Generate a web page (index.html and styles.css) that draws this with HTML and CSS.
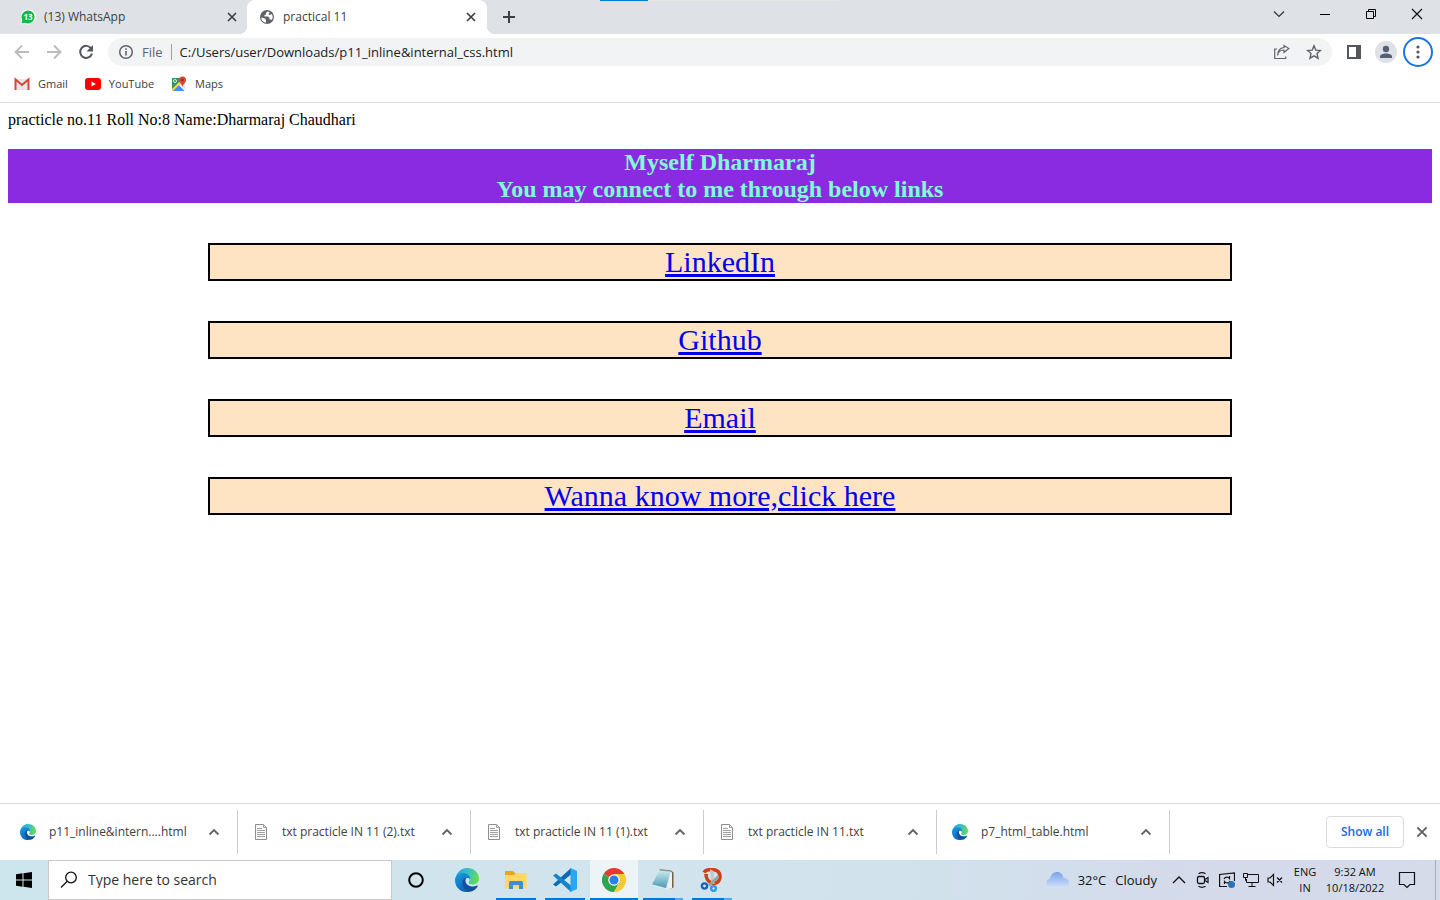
FILE: index.html
```html
<!DOCTYPE html>
<html lang="en">
<head>
<meta charset="utf-8">
<title>practical 11</title>
<link rel="stylesheet" href="styles.css">
</head>
<body class="desktop">
<svg class="defs" aria-hidden="true">
  <defs>
    <linearGradient id="edgeTop" x1="0" y1="0.3" x2="1" y2="0.5"><stop offset="0" stop-color="#2aa5dd"/><stop offset="0.5" stop-color="#35c1c4"/><stop offset="1" stop-color="#66e04a"/></linearGradient>
    <linearGradient id="edgeLeft" x1="0" y1="0" x2="0.5" y2="1"><stop offset="0" stop-color="#1b9de2"/><stop offset="1" stop-color="#0d62bf"/></linearGradient>
    <linearGradient id="cloud" x1="0" y1="0" x2="0" y2="1"><stop offset="0" stop-color="#7ba3e8"/><stop offset="1" stop-color="#d3e2fb"/></linearGradient>
    <linearGradient id="pad" x1="0" y1="0" x2="0" y2="1"><stop offset="0" stop-color="#c9e9ef"/><stop offset="1" stop-color="#4c9bb5"/></linearGradient>
    <symbol id="edge" viewBox="0 0 24 24">
      <path d="M1 9C2 4 6.500 0 12 0c7 0 12 5 12 10.500 0 4-3 6-6.500 6-2.500 0-4-1-4-2 0-.700 1.200-1.300 1.200-3 0-2.500-2.700-4.500-6.200-4.500C5 7 2 8 1 9z" fill="url(#edgeTop)"/>
      <path d="M0 12c0-4 3.500-7 8-7 4.500 0 7.500 3 7 6.500-1-2-5-2-6.500.500C6 16 9 22 15 23.500 7 26 0 20 0 12z" fill="url(#edgeLeft)"/>
      <path d="M9 10.500C5.500 14 7 21 13.500 23.800c4 0 7.500-2.300 9.200-5.600.300-.600-.200-.900-.700-.600C17 20 10 17.500 10.500 12c.100-1 .500-1.800 1-2.300-1 0-1.800.200-2.500.8z" fill="#12509d"/>
    </symbol>
    <symbol id="doc" viewBox="0 0 16 16">
      <path d="M2.500.5h8l3 3v12h-11z" fill="#fafafa" stroke="#8f8f8f"/><path d="M10.500.5v3h3M4 4.500h5M4 6.500h8M4 8.500h8M4 10.500h8M4 12.500h8" fill="none" stroke="#a0a0a0"/>
    </symbol>
    <symbol id="caret" viewBox="0 0 12 12"><path d="M1.500 8.500 6 4l4.500 4.500" fill="none" stroke="#5f6368" stroke-width="1.800"/></symbol>
    <symbol id="close" viewBox="0 0 12 12"><path d="m2 2 8 8M10 2l-8 8" fill="none" stroke="currentColor" stroke-width="1.700"/></symbol>
  </defs>
</svg>

<header class="browser">
  <div class="tabstrip">
    <div class="tab">
      <svg class="i16" viewBox="0 0 16 16"><path d="M.5 15.500 1.500 11A7.500 7.500 0 1 1 5 14.700z" fill="#fff"/><path d="M1.500 14.500 2.300 11A6.500 6.500 0 1 1 5 13.700z" fill="#12b948"/><text x="8" y="11" text-anchor="middle" class="badge">13</text></svg>
      <span class="tab-title">(13) WhatsApp</span>
      <button class="tab-close" aria-label="Close tab"><svg class="i12"><use href="#close"/></svg></button>
    </div>
    <div class="tab active">
      <svg class="i16" viewBox="0 0 16 16"><circle cx="8" cy="8" r="7" fill="#5f6368"/><path d="M2.500 8.500 6 9.500l1 1.500v2.500C4 13.500 2 11 2.500 8.500zM8.500 2.500 7 4v1.500L5.500 6v1.500H9L10.500 9v1.500h1.500l1 .5C14 8.500 14 6.500 12.500 5L11 6 9.500 5.500 10.500 3z" fill="#fff"/></svg>
      <span class="tab-title">practical 11</span>
      <button class="tab-close" aria-label="Close tab"><svg class="i12"><use href="#close"/></svg></button>
    </div>
    <button class="new-tab" aria-label="New tab"><svg class="i12" viewBox="0 0 12 12"><path d="M6 0v12M0 6h12" stroke="#3c4043" stroke-width="2"/></svg></button>
    <div class="progress"><span></span></div>
    <div class="window-controls">
      <button aria-label="Search tabs"><svg class="i12" viewBox="0 0 12 12"><path d="m1 3.500 5 5 5-5" fill="none" stroke="#333" stroke-width="1.200"/></svg></button>
      <button aria-label="Minimize"><svg class="i12" viewBox="0 0 12 12"><path d="M1 6.500h10" stroke="#000"/></svg></button>
      <button aria-label="Restore"><svg class="i12" viewBox="0 0 12 12"><path d="M1.500 3.500h7v7h-7zM3.500 3.500v-2h7v7h-2" fill="none" stroke="#000"/></svg></button>
      <button aria-label="Close"><svg class="i12" viewBox="0 0 12 12"><path d="m1 1 10 10M11 1 1 11" stroke="#111" stroke-width="1.200"/></svg></button>
    </div>
  </div>
  <div class="toolbar">
    <button class="tool" aria-label="Back"><svg class="i16" viewBox="0 0 16 16"><path d="M15 8H2M8 1.500 1.500 8 8 14.500" fill="none" stroke="#babcbe" stroke-width="1.800"/></svg></button>
    <button class="tool" aria-label="Forward"><svg class="i16" viewBox="0 0 16 16"><path d="M1 8h13M8 1.500 14.500 8 8 14.500" fill="none" stroke="#babcbe" stroke-width="1.800"/></svg></button>
    <button class="tool" aria-label="Reload"><svg class="i16" viewBox="0 0 16 16"><path d="M13.200 4.500A6 6 0 1 0 14 9.500" fill="none" stroke="#53565a" stroke-width="2"/><path d="M15 1v6.500H8.500z" fill="#53565a"/></svg></button>
    <div class="omnibox">
      <svg class="i16" viewBox="0 0 16 16"><circle cx="8" cy="8" r="6.300" fill="none" stroke="#5f6368" stroke-width="1.500"/><path d="M8 7v4.500M8 4.200v1.600" stroke="#5f6368" stroke-width="1.600"/></svg>
      <label class="scheme" for="url">File</label>
      <input id="url" class="url" type="text" value="C:/Users/user/Downloads/p11_inline&amp;internal_css.html">
      <button class="tool" aria-label="Share"><svg class="i16" viewBox="0 0 16 16"><path d="M3 5H.700v9.500h11V12.500M3.700 11.500C4 7.500 6.500 6 10 6v2.500l4.800-4L10 1.500v2C6 4 3.700 7 3.700 11.500z" fill="none" stroke="#5f6368" stroke-width="1.200"/></svg></button>
      <button class="tool" aria-label="Bookmark this page"><svg class="i16" viewBox="0 0 16 16"><path d="m8 1.800 1.800 4.300 4.700.4-3.500 3.100 1 4.600L8 11.800l-4 2.400 1-4.600L1.500 6.500l4.700-.4z" fill="none" stroke="#5f6368" stroke-width="1.400"/></svg></button>
    </div>
    <button class="tool" aria-label="Side panel"><svg class="i16" viewBox="0 0 16 16"><path d="M2 2h12v12H2z" fill="none" stroke="#53565a" stroke-width="2"/><path d="M10 2h5v12h-5z" fill="#53565a"/></svg></button>
    <button class="tool" aria-label="Profile"><svg class="i22" viewBox="0 0 22 22"><circle cx="11" cy="11" r="11" fill="#dee1e6"/><circle cx="11" cy="8" r="3.200" fill="#566074"/><path d="M5 17v-1.500c0-2 3-3 6-3s6 1 6 3V17z" fill="#566074"/></svg></button>
    <button class="menu" aria-label="Menu"><svg class="i16" viewBox="0 0 16 16" fill="#53565a"><circle cx="8" cy="3" r="1.600"/><circle cx="8" cy="8" r="1.600"/><circle cx="8" cy="13" r="1.600"/></svg></button>
  </div>
  <nav class="bookmarks" aria-label="Bookmarks">
    <a href="#gmail"><svg class="i16" viewBox="0 0 16 16"><path d="M1 3h14v11H1z" fill="#e6e6e6"/><path d="M1.500 14V3.500L8 9l6.500-5.500V14" fill="none" stroke="#d9453a" stroke-width="2"/></svg>Gmail</a>
    <a href="#youtube"><svg class="i16" viewBox="0 0 16 16"><rect y="2" width="16" height="12" rx="3" fill="#f00"/><path d="m6.500 5.500 4.500 2.500-4.500 2.500z" fill="#fff"/></svg>YouTube</a>
    <a href="#maps"><svg class="i16" viewBox="0 0 16 16"><rect x="1" y="2" width="13" height="13" rx="1" fill="#e3e6e8"/><path d="M1 2h9L8 8l-7 6z" fill="#31985a"/><path d="m1.500 15 6.500-6.500 6 6.500z" fill="#4a8af4"/><path d="m1 14.500 8-8" stroke="#fdd34a" stroke-width="2"/><path d="m8 8.500 6 6.500" stroke="#fff"/><circle cx="4" cy="5" r="1.500" fill="none" stroke="#d6eadd"/><path d="M11.500 11C11 8 8 7 8 4a3.500 3.500 0 0 1 7 0c0 3-3 4-3.500 7z" fill="#db4437"/><circle cx="11.500" cy="4" r="1.300" fill="#8a2a22"/></svg>Maps</a>
  </nav>
</header>

<main class="page">
  <p class="intro">practicle no.11 Roll No:8 Name:Dharmaraj Chaudhari</p>
  <h2 class="banner">Myself Dharmaraj<br>You may connect to me through below links</h2>
  <div class="link-box"><a href="#linkedin">LinkedIn</a></div>
  <div class="link-box"><a href="#github">Github</a></div>
  <div class="link-box"><a href="#email">Email</a></div>
  <div class="link-box"><a href="#more">Wanna know more,click here</a></div>
</main>

<section class="downloads" aria-label="Downloads">
  <div class="download"><svg class="i16"><use href="#edge"/></svg><span>p11_inline&amp;intern....html</span><button aria-label="Options"><svg class="i12"><use href="#caret"/></svg></button></div>
  <div class="download"><svg class="i16"><use href="#doc"/></svg><span>txt practicle IN 11 (2).txt</span><button aria-label="Options"><svg class="i12"><use href="#caret"/></svg></button></div>
  <div class="download"><svg class="i16"><use href="#doc"/></svg><span>txt practicle IN 11 (1).txt</span><button aria-label="Options"><svg class="i12"><use href="#caret"/></svg></button></div>
  <div class="download"><svg class="i16"><use href="#doc"/></svg><span>txt practicle IN 11.txt</span><button aria-label="Options"><svg class="i12"><use href="#caret"/></svg></button></div>
  <div class="download"><svg class="i16"><use href="#edge"/></svg><span>p7_html_table.html</span><button aria-label="Options"><svg class="i12"><use href="#caret"/></svg></button></div>
  <button class="show-all">Show all</button>
  <button class="shelf-close" aria-label="Close downloads"><svg class="i14"><use href="#close"/></svg></button>
</section>

<footer class="taskbar">
  <button class="start" aria-label="Start"><svg class="i16" viewBox="0 0 16 16"><path d="M0 2.200 6.500 1.300v6.200H0zM7.500 1.200 16 0v7.500H7.500zM0 8.500h6.500v6.200L0 13.800zM7.500 8.500H16V16l-8.500-1.200z"/></svg></button>
  <label class="search">
    <svg class="i18" viewBox="0 0 18 18"><circle cx="11" cy="6.500" r="5.300" fill="none" stroke="#111" stroke-width="1.300"/><path d="m7 10.500-6 6" stroke="#111" stroke-width="1.300"/></svg>
    <input type="text" placeholder="Type here to search" aria-label="Type here to search">
  </label>
  <button class="start" aria-label="Cortana"><svg class="i16" viewBox="0 0 16 16"><circle cx="8" cy="8" r="6.800" fill="none" stroke="#000" stroke-width="2"/></svg></button>
  <div class="apps">
    <button class="app" aria-label="Edge"><svg class="i24"><use href="#edge"/></svg></button>
    <button class="app running" aria-label="File Explorer"><svg class="i24" viewBox="0 0 24 24"><path d="M1 3h8l2 2h11v5H1z" fill="#e9a51b"/><path d="M1 7h9l2-2h10.500v15.500H1z" fill="#ffd767"/><path d="M5 21v-6.500c0-.8.700-1.500 1.500-1.500h11c.8 0 1.500.7 1.500 1.500V21h-4v-4H9v4z" fill="#3c8fd2"/></svg></button>
    <button class="app running" aria-label="Visual Studio Code"><svg class="i24" viewBox="0 0 24 24"><path d="M18 0v6.500L3 18.500l-3-2 18-16.500z" fill="#0b6bb5"/><path d="M18 24v-6.500L3 5.500l-3 2L18 24z" fill="#1484cf"/><path d="m17.500 0 6.500 3v18l-6.500 3z" fill="#29a7f0"/></svg></button>
    <button class="app running current" aria-label="Chrome"><svg class="i24" viewBox="0 0 24 24"><path d="M12 12 1.600 6A12 12 0 0 1 22.400 6z" fill="#e33b2e"/><path d="M12 12 1.600 6A12 12 0 0 0 12 24l5-9z" fill="#2da44e"/><path d="M12 6h10.400A12 12 0 0 1 12 24l5.200-9z" fill="#fcc934"/><circle cx="12" cy="12" r="5.800" fill="#fff"/><circle cx="12" cy="12" r="4.600" fill="#2f7de9"/></svg></button>
    <button class="app running stacked" aria-label="Notepad"><svg class="i24" viewBox="0 0 24 24"><path d="m20 2.500 2.500 2v15L18 21z" fill="#77603f"/><path d="m19.500 3 1.500 1.500V20l-4.500 1.500z" fill="#f1f0ea"/><path d="M8 1.500 20 3l-4 18.500L0 17.500z" fill="#e2edf0"/><path d="M8 2.500 19.500 4l-4.500 16L1 16.500z" fill="url(#pad)"/><path d="M8.500 1.800 20 3" stroke="#8b8f90" stroke-width="1.500"/></svg></button>
    <button class="app running stacked" aria-label="Snipping Tool"><svg class="i24" viewBox="0 0 24 24"><path d="M4 4.500C6 1 19-1 20 8c0 6-4 8-8 7-4-1-6-5-6-9" fill="none" stroke="#d03f12" stroke-width="3.600"/><path d="m10 1 3.500 2 1 13h-3z" fill="#c4c7ca"/><path d="M18.500 6.500 19 10l-9 8.500-2-2z" fill="#9da1a6"/><circle cx="4.500" cy="18" r="2.600" fill="none" stroke="#1763b5" stroke-width="2.400"/><circle cx="13.500" cy="20.500" r="2.400" fill="none" stroke="#279ce8" stroke-width="2.400"/></svg></button>
  </div>
  <div class="tray">
    <button class="weather"><svg class="i24" viewBox="0 0 24 24"><path d="M5 20a5 5 0 0 1 0-9.500C6 6 9 4 12 4c4 0 6 2.500 6.500 6C22 10 24 12.500 24 15s-2 5-5 5z" fill="url(#cloud)"/></svg><span>32°C</span><span>Cloudy</span></button>
    <button class="tray-icon" aria-label="Hidden icons"><svg class="i16" viewBox="0 0 16 16"><path d="m2 11 6-6 6 6" fill="none" stroke="#111" stroke-width="1.400"/></svg></button>
    <button class="tray-icon" aria-label="Meet now"><svg class="i16" viewBox="0 0 16 16"><rect x="2.500" y="4.500" width="7" height="7" rx="1.500" fill="none" stroke="#111" stroke-width="1.300"/><path d="m10 7.500 3-2v5l-3-2M3.500 1.700Q7-.3 10.500 1.700M3.500 14.300q3.500 2 7 0" fill="none" stroke="#111" stroke-width="1.200"/></svg></button>
    <button class="tray-icon" aria-label="Update"><svg class="i16" viewBox="0 0 16 16"><path d="M8 14.500H.600v-12L15.500 1v8M5 7c1-2.500 4-2.500 5.500-.5V4M11 9c-1 2.500-4 2.500-5.500.5V12" fill="none" stroke="#111" stroke-width="1.200"/><circle cx="12.500" cy="12.500" r="3.500" fill="#2b74b9"/></svg></button>
    <button class="tray-icon" aria-label="Network"><svg class="i16" viewBox="0 0 16 16"><path d="M5 2.500h10.500v8H3.500V7M5.500 14.500h7M9 10.500v4M.5 1.500h4v4h-4zM2.500 5.500v3h1" fill="none" stroke="#111"/></svg></button>
    <button class="tray-icon" aria-label="Volume muted"><svg class="i16" viewBox="0 0 16 16"><path d="M1 6h2l3.500-3.500v11L3 10H1zM10 5.500l5 5M15 5.500l-5 5" fill="none" stroke="#111" stroke-width="1.200"/></svg></button>
    <button class="lang">ENG<br>IN</button>
    <button class="clock">9:32 AM<br>10/18/2022</button>
    <button class="notify" aria-label="Notifications"><svg class="i18" viewBox="0 0 18 18"><path d="M1.500 1.500h15v12H12l-3 3-3-3H1.500z" fill="none" stroke="#111" stroke-width="1.200"/></svg></button>
    <button class="show-desktop" aria-label="Show desktop"></button>
  </div>
</footer>
</body>
</html>
```
FILE: styles.css
```css
* { box-sizing: border-box; }
.desktop {
  margin: 0;
  min-height: 100vh;
  display: flex;
  flex-direction: column;
  background: #fff;
  color: #3c4043;
  font: 12px/16px "Open Sans", "Noto Sans", sans-serif;
}
button {
  display: flex;
  align-items: center;
  justify-content: center;
  padding: 0;
  border: 0;
  background: none;
  color: inherit;
  font: inherit;
}
input { border: 0; padding: 0; background: none; font: inherit; outline: 0; }
svg { display: block; flex: none; }
.defs { position: absolute; width: 0; height: 0; }
.i12 { width: 12px; height: 12px; }
.i14 { width: 14px; height: 14px; }
.i16 { width: 16px; height: 16px; }
.i18 { width: 18px; height: 18px; }
.i22 { width: 22px; height: 22px; }
.i24 { width: 24px; height: 24px; }
.badge { font: bold 8px "Open Sans", sans-serif; fill: #fff; }

.tabstrip { position: relative; display: flex; height: 34px; background: #dee1e6; }
.tab { position: relative; display: flex; align-items: center; gap: 8px; width: 240px; padding: 0 8px 0 12px; }
.tab:first-child { width: 247px; padding: 0 7px 0 20px; }
.tab.active { background: #fff; border-radius: 8px 8px 0 0; }
.tab.active::before, .tab.active::after { content: ""; position: absolute; bottom: 0; width: 8px; height: 8px; }
.tab.active::before { right: 100%; background: radial-gradient(circle at 0 0, #dee1e6 8px, #fff 8px); }
.tab.active::after { left: 100%; background: radial-gradient(circle at 100% 0, #dee1e6 8px, #fff 8px); }
.tab-title { flex: 1; }
.tab-close { width: 16px; height: 16px; }
.new-tab { width: 44px; }
.progress { position: absolute; top: 0; left: 600px; width: 240px; height: 1px; background: #e6e6e6; }
.progress span { display: block; width: 20%; height: 100%; background: #0078d7; }
.window-controls { display: flex; margin-left: auto; height: 28px; }
.window-controls button { width: 46px; }

.toolbar { display: flex; align-items: center; height: 36px; padding: 0 6px; }
.tool { width: 32px; height: 28px; }
.omnibox { flex: 1; display: flex; align-items: center; height: 28px; margin: 0 6px; padding: 0 2px 0 10px; border-radius: 14px; background: #f1f3f4; font-size: 13px; }
.scheme { margin-left: 8px; padding-right: 8px; border-right: 1px solid #9aa0a6; color: #5f6368; }
.url { flex: 1; min-width: 0; margin-left: 8px; color: #202124; }
.menu { width: 30px; height: 30px; margin: 0 1px; border: 2px solid #1a73e8; border-radius: 50%; }
.bookmarks { display: flex; align-items: center; gap: 17px; height: 33px; padding: 0 14px 4px; border-bottom: 1px solid #dadce0; font-size: 11px; }
.bookmarks a { display: flex; align-items: center; gap: 8px; color: inherit; text-decoration: none; }

.page { flex: 1; padding: 8px; color: #000; font: 16px/18px "Liberation Serif", serif; }
.intro { margin: 0; }
.banner { margin: 20px 0 40px; background: blueviolet; color: aquamarine; font-size: 24px; line-height: 27px; text-align: center; }
.link-box { margin: 40px 200px; border: 2px solid #000; background: bisque; font-size: 30px; line-height: 34px; text-align: center; }
.link-box a { color: #00e; }

.downloads { display: flex; align-items: center; height: 57px; padding: 0 11px 0 5px; border-top: 1px solid #dadce0; }
.download { display: flex; align-items: center; width: 233px; height: 44px; padding: 0 17px 0 15px; border-right: 1px solid #ccc; }
.download span { flex: 1; margin-left: 13px; white-space: nowrap; }
.show-all { width: 78px; height: 32px; margin-left: auto; border: 1px solid #dadce0; border-radius: 4px; color: #1a67e8; font-weight: 600; }
.shelf-close { margin-left: 11px; color: #5f6368; }

.taskbar { display: flex; height: 40px; background: linear-gradient(90deg, #cde5ed, #d2e4ed 45%, #d1e1ec 65%, #d4daea 85%, #d4dbe9); color: #111; }
.start { width: 48px; }
.search { display: flex; align-items: center; gap: 10px; width: 344px; padding: 0 11px; border: 1px solid #c8c8c8; background: #fff; font-size: 14px; }
.search input { flex: 1; min-width: 0; }
.search input::placeholder { color: #333; opacity: 1; }
.apps { display: flex; gap: 1px; margin-left: 3px; }
.app { position: relative; width: 48px; }
.running::after { content: ""; position: absolute; bottom: 0; left: 4px; right: 4px; height: 2px; background: #0078d7; }
.current { background: #ecf4f8; }
.current::after { left: 0; right: 0; }
.stacked::after { background: linear-gradient(90deg, #0078d7 80%, #5ca8e6 80%); }
.tray { display: flex; margin-left: auto; }
.weather { gap: 9px; margin-right: 10px; font-size: 13px; }
.tray-icon { width: 24px; }
.lang { width: 36px; font-size: 11px; }
.clock { width: 64px; font-size: 11px; }
.notify { width: 40px; margin-right: 8px; }
.show-desktop { width: 5px; border-left: 1px solid #a7adbb; }
```
